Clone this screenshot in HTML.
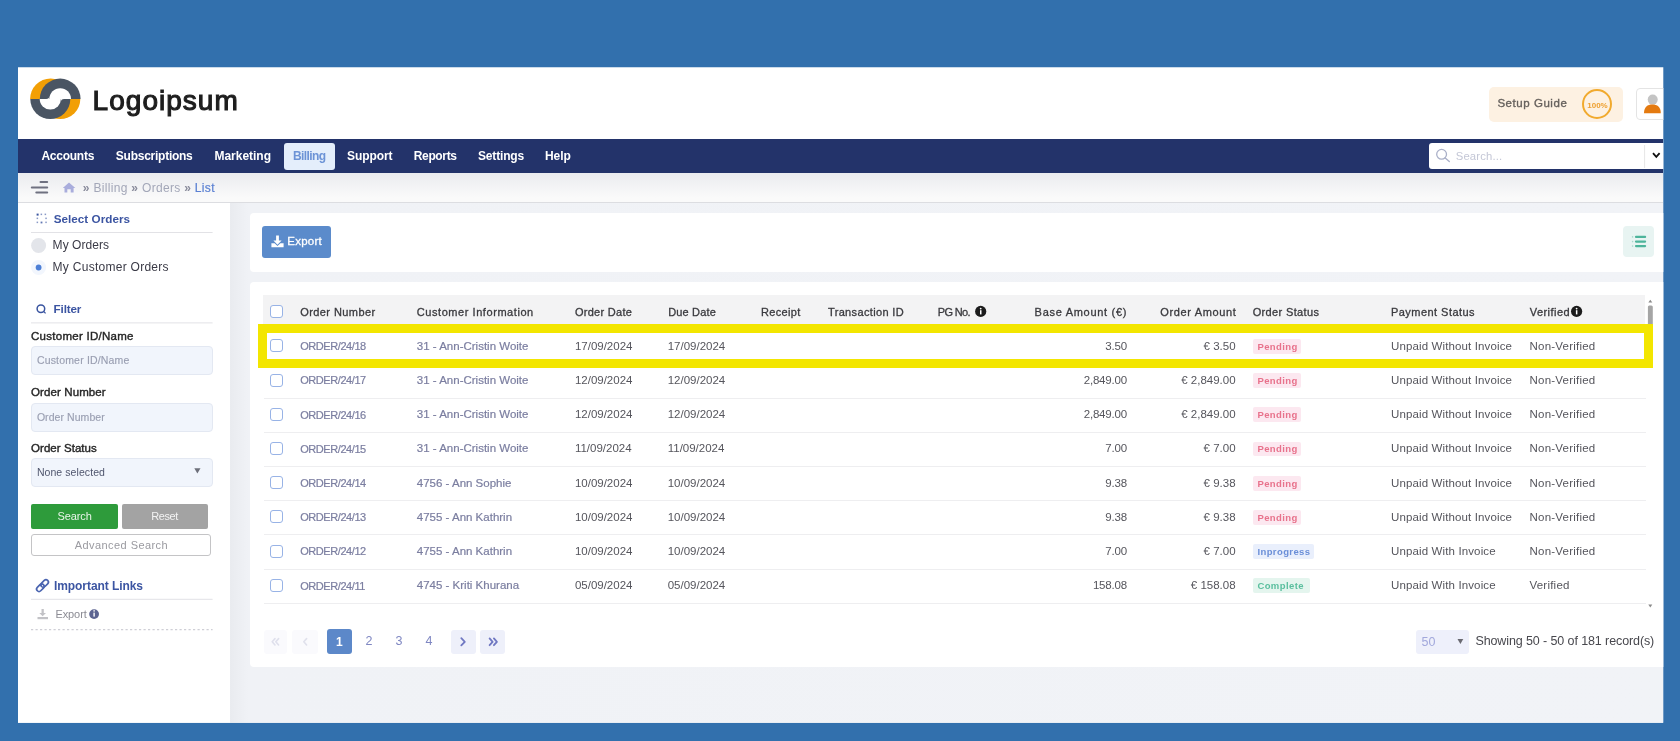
<!DOCTYPE html><html><head><meta charset="utf-8"><style>html,body{margin:0;padding:0;}body{width:1680px;height:741px;overflow:hidden;position:relative;background:#3270ad;font-family:"Liberation Sans", sans-serif;}div{box-sizing:border-box;white-space:nowrap;line-height:1;}svg{position:absolute;overflow:visible;}</style></head><body><div style="position:absolute;left:0;top:0;width:1680px;height:741px;filter:blur(0.45px);"><div style="position:absolute;left:0;top:0;width:1680px;height:741px;background:#3270ad;"></div><div style="position:absolute;left:0;top:0;width:1680px;height:741px;clip-path:inset(67.3px 16.7px 18.2px 17.5px)"><div style="position:absolute;left:17.5px;top:67.3px;width:1646px;height:656px;background:#fff;overflow:hidden;"></div>
<svg style="left:0;top:0" width="1680" height="741" viewBox="0 0 1680 741">
<path d="M30.1 99 A20.5 20.5 0 0 1 71.1 99 Z" fill="#f29f05"/>
<path d="M40.3 99 A80.7 20.4 0 0 1 40.3 99 Z" fill="#4a5563"/>
<path d="M39.8 99 A20.4 20.4 0 0 1 80.6 99 Z" fill="#4a5563"/>
<path d="M49.4 99 A10.8 10.8 0 0 1 71 99 Z" fill="#fff"/>
<path d="M40.1 99 A20.1 20.1 0 0 0 80.3 99 Z" fill="#f29f05"/>
<path d="M30.3 99 A20 20 0 0 0 70.3 99 Z" fill="#4a5563"/>
<path d="M39.7 99 A10.6 10.6 0 0 0 60.9 99 Z" fill="#fff"/>
<path d="M49.4 95.8 L49.4 99 L46.2 99 A3.2 3.2 0 0 0 49.4 95.8 Z" fill="#fff"/>
<path d="M60.9 102.2 L60.9 99 L64.1 99 A3.2 3.2 0 0 0 60.9 102.2 Z" fill="#fff"/>
</svg>
<div id="t0" style="position:absolute;left:92.60px;top:87.10px;font-size:28px;font-weight:400;color:#1e1e1e;letter-spacing:1.027px;-webkit-text-stroke:1.1px #1e1e1e;">Logoipsum</div>
<div style="position:absolute;left:1489.3px;top:86.5px;width:133.4px;height:35.4px;background:#fdf1e2;border-radius:5px;"></div>
<div id="t1" style="position:absolute;left:1497.40px;top:97.52px;font-size:11.5px;font-weight:400;color:#66615d;letter-spacing:0.546px;-webkit-text-stroke:0.35px #66615d;">Setup Guide</div>
<div style="position:absolute;left:1582.4px;top:89.3px;width:30px;height:30px;border:2.3px solid #f1aa2e;border-radius:50%;"></div>
<div id="t2" style="position:absolute;left:1587.30px;top:101.70px;font-size:8px;font-weight:700;color:#eea030;letter-spacing:-0.023px;">100%</div>
<div style="position:absolute;left:1636.3px;top:88.2px;width:40px;height:31.6px;border:1px solid #e4e4e4;border-radius:4px;background:#fff;"></div>
<svg style="left:0;top:0" width="1680" height="741">
<circle cx="1652.7" cy="99.6" r="5" fill="#c4c4c4"/>
<path d="M1644 113.3 C1644 107 1647.5 104.5 1652.4 104.5 C1657.3 104.5 1660.8 107 1660.8 113.3 Z" fill="#e47a10"/>
</svg>
<div style="position:absolute;left:18px;top:138.5px;width:1645.3px;height:34.7px;background:#23336a;"></div>
<div style="position:absolute;left:283.5px;top:142.5px;width:51.2px;height:27.4px;background:#e4eefb;border-radius:3px;"></div>
<div id="t3" style="position:absolute;left:41.40px;top:150.10px;font-size:12px;font-weight:700;color:#ffffff;letter-spacing:-0.241px;">Accounts</div>
<div id="t4" style="position:absolute;left:115.80px;top:150.10px;font-size:12px;font-weight:700;color:#ffffff;letter-spacing:-0.251px;">Subscriptions</div>
<div id="t5" style="position:absolute;left:214.50px;top:150.10px;font-size:12px;font-weight:700;color:#ffffff;letter-spacing:-0.023px;">Marketing</div>
<div id="t6" style="position:absolute;left:293.00px;top:150.10px;font-size:12px;font-weight:700;color:#6c93d6;letter-spacing:-0.579px;">Billing</div>
<div id="t7" style="position:absolute;left:347.00px;top:150.10px;font-size:12px;font-weight:700;color:#ffffff;letter-spacing:-0.083px;">Support</div>
<div id="t8" style="position:absolute;left:413.75px;top:150.10px;font-size:12px;font-weight:700;color:#ffffff;letter-spacing:-0.357px;">Reports</div>
<div id="t9" style="position:absolute;left:478.00px;top:150.10px;font-size:12px;font-weight:700;color:#ffffff;letter-spacing:-0.163px;">Settings</div>
<div id="t10" style="position:absolute;left:545.00px;top:150.10px;font-size:12px;font-weight:700;color:#ffffff;letter-spacing:-0.072px;">Help</div>
<div style="position:absolute;left:1429.4px;top:143.4px;width:260px;height:25.9px;background:#fff;border-radius:3px;"></div>
<svg style="left:0;top:0" width="1680" height="741">
<circle cx="1441.6" cy="154.3" r="4.9" fill="none" stroke="#aab0c8" stroke-width="1.3"/>
<line x1="1445.2" y1="157.9" x2="1449.3" y2="161.6" stroke="#aab0c8" stroke-width="1.4" stroke-linecap="round"/>
<line x1="1644.6" y1="145" x2="1644.6" y2="168" stroke="#e6e6e6" stroke-width="1"/>
<path d="M1653 153.2 L1656.3 156.8 L1659.6 153.2" fill="none" stroke="#111" stroke-width="1.8"/>
</svg>
<div id="t11" style="position:absolute;left:1455.70px;top:150.59px;font-size:11.3px;font-weight:400;color:#c4c7d6;letter-spacing:0.160px;">Search...</div>
<div style="position:absolute;left:18px;top:173.2px;width:1645.3px;height:29.5px;background:linear-gradient(#eaebef,#fafafa 85%);border-bottom:1px solid #dcdde1;"></div>
<svg style="left:0;top:0" width="1680" height="741">
<g stroke="#6f7180" stroke-width="2" stroke-linecap="round">
<line x1="40.5" y1="182.1" x2="47.2" y2="182.1"/>
<line x1="31.8" y1="187.4" x2="47.2" y2="187.4"/>
<line x1="36.3" y1="192.6" x2="47.2" y2="192.6"/>
</g>
<path d="M62.8 188 L69 182.6 L75.3 188 L73.6 188 L73.6 192.6 L70.7 192.6 L70.7 189.2 L67.3 189.2 L67.3 192.6 L64.5 192.6 L64.5 188 Z" fill="#a9addc"/>
</svg>
<div id="t12" style="position:absolute;left:82.80px;top:182.10px;font-size:12px;font-weight:400;color:#a3a7b8;letter-spacing:0.316px;"><b style="color:#8a8c9c">»</b> Billing <b style="color:#8a8c9c">»</b> Orders <b style="color:#8a8c9c">»</b> <span style="color:#5b80d3;-webkit-text-stroke:0.2px #5b80d3">List</span></div>
<div style="position:absolute;left:230px;top:203px;width:1433.3px;height:520.5px;background:linear-gradient(90deg,#e9ebef,#f0f2f6 18px,#f1f3f7);"></div>
<div style="position:absolute;left:18px;top:203px;width:212px;height:520.5px;background:#fff;"></div>
<div style="position:absolute;left:249.5px;top:212.5px;width:1500px;height:59.2px;background:#fff;border-radius:4px;"></div>
<div style="position:absolute;left:249.5px;top:282px;width:1500px;height:385.4px;background:#fff;border-radius:4px;"></div>
<svg style="left:0;top:0" width="1680" height="741">
<g fill="#3a55a0">
<rect x="36.6" y="213.6" width="2" height="2"/><rect x="40.6" y="213.6" width="1.5" height="1.5" opacity=".6"/><rect x="44.6" y="213.6" width="1.5" height="1.5" opacity=".6"/>
<rect x="36.6" y="217.6" width="1.5" height="1.5" opacity=".6"/><rect x="45.3" y="217.6" width="1.5" height="1.5" opacity=".6"/>
<rect x="36.6" y="221.6" width="1.5" height="1.5" opacity=".6"/><rect x="40.6" y="221.6" width="1.8" height="1.8" opacity=".8"/><rect x="45.3" y="221.6" width="1.5" height="1.5" opacity=".6"/>
</g>
<line x1="31" y1="232.5" x2="212.6" y2="232.5" stroke="#e2e2e6" stroke-width="1"/>
<circle cx="38.6" cy="245.5" r="7.5" fill="#e3e5ea"/>
<circle cx="38.6" cy="267.5" r="7.5" fill="#f2f6fd"/>
<circle cx="38.6" cy="267.5" r="2.9" fill="#4d7fd6"/>
<circle cx="40.9" cy="308.7" r="3.8" fill="none" stroke="#3a55a0" stroke-width="1.5"/>
<line x1="43.6" y1="311.4" x2="45.6" y2="313.4" stroke="#3a55a0" stroke-width="1.3"/>
<line x1="31" y1="322.9" x2="212.6" y2="322.9" stroke="#e2e2e6" stroke-width="1"/>
</svg>
<div id="t13" style="position:absolute;left:53.70px;top:213.16px;font-size:11.7px;font-weight:700;color:#3c55a2;letter-spacing:0.024px;">Select Orders</div>
<div id="t14" style="position:absolute;left:52.60px;top:239.00px;font-size:12px;font-weight:400;color:#3a3a46;letter-spacing:0.048px;">My Orders</div>
<div id="t15" style="position:absolute;left:52.60px;top:261.00px;font-size:12px;font-weight:400;color:#3a3a46;letter-spacing:0.273px;">My Customer Orders</div>
<div id="t16" style="position:absolute;left:53.60px;top:303.06px;font-size:11.7px;font-weight:700;color:#3c55a2;letter-spacing:-0.156px;">Filter</div>
<div id="t17" style="position:absolute;left:31.00px;top:330.62px;font-size:11.5px;font-weight:400;color:#262626;letter-spacing:0.272px;-webkit-text-stroke:0.4px #262626;">Customer ID/Name</div>
<div style="position:absolute;left:31px;top:346px;width:181.8px;height:29px;background:#f1f5fc;border:1px solid #e3e8f2;border-radius:4px;"></div>
<div id="t18" style="position:absolute;left:36.90px;top:355.38px;font-size:10.5px;font-weight:400;color:#9a9fb2;letter-spacing:0.176px;-webkit-text-stroke:0.15px #9a9fb2;">Customer ID/Name</div>
<div id="t19" style="position:absolute;left:31.00px;top:386.83px;font-size:11.5px;font-weight:400;color:#262626;letter-spacing:0.109px;-webkit-text-stroke:0.4px #262626;">Order Number</div>
<div style="position:absolute;left:31px;top:402.5px;width:181.8px;height:29px;background:#f1f5fc;border:1px solid #e3e8f2;border-radius:4px;"></div>
<div id="t20" style="position:absolute;left:36.90px;top:411.88px;font-size:10.5px;font-weight:400;color:#9a9fb2;letter-spacing:0.063px;-webkit-text-stroke:0.15px #9a9fb2;">Order Number</div>
<div id="t21" style="position:absolute;left:31.00px;top:442.62px;font-size:11.5px;font-weight:400;color:#262626;letter-spacing:0.054px;-webkit-text-stroke:0.4px #262626;">Order Status</div>
<div style="position:absolute;left:31px;top:458px;width:181.8px;height:28.5px;background:#f1f5fc;border:1px solid #e3e8f2;border-radius:4px;"></div>
<div id="t22" style="position:absolute;left:36.90px;top:467.38px;font-size:10.5px;font-weight:400;color:#50566e;letter-spacing:0.072px;">None selected</div>
<svg style="left:0;top:0" width="1680" height="741"><path d="M194.3 468.3 L200.5 468.3 L197.4 473.6 Z" fill="#6d6f7a"/></svg>
<div style="position:absolute;left:30.5px;top:504.2px;width:87.1px;height:24.7px;background:#2e9b3b;border-radius:2px;"></div>
<div id="t23" style="position:absolute;left:57.50px;top:511.25px;font-size:11px;font-weight:400;color:#e8f5e8;letter-spacing:-0.092px;">Search</div>
<div style="position:absolute;left:121.6px;top:504.2px;width:86.6px;height:24.7px;background:#a3a3a3;border-radius:2px;"></div>
<div id="t24" style="position:absolute;left:151.20px;top:511.25px;font-size:11px;font-weight:400;color:#f3f3f3;letter-spacing:-0.412px;">Reset</div>
<div style="position:absolute;left:31.2px;top:534px;width:180.1px;height:22.4px;background:#fff;border:1.5px solid #c4c4c6;border-radius:3px;"></div>
<div id="t25" style="position:absolute;left:74.70px;top:539.95px;font-size:11px;font-weight:400;color:#9a9aa0;letter-spacing:0.440px;">Advanced Search</div>
<svg style="left:0;top:0" width="1680" height="741">
<g fill="none" stroke="#4a64b0" stroke-width="1.7" transform="rotate(-45 42.5 585.6)">
<rect x="35.2" y="583.2" width="8.6" height="4.8" rx="2.4"/>
<rect x="41.2" y="583.2" width="8.6" height="4.8" rx="2.4"/>
</g>
<line x1="31" y1="599.3" x2="212.6" y2="599.3" stroke="#e2e2e6" stroke-width="1"/>
<g fill="#c2c2c6"><path d="M41.5 609 L43.8 609 L43.8 613 L46 613 L42.65 616.3 L39.3 613 L41.5 613 Z"/><rect x="37.5" y="617" width="10.5" height="2.2"/></g>
<circle cx="94.1" cy="614.1" r="4.9" fill="#5c6491"/>
<rect x="93.4" y="612.6" width="1.4" height="4" fill="#fff"/><circle cx="94.1" cy="610.9" r=".8" fill="#fff"/>
<line x1="31" y1="629.6" x2="212.6" y2="629.6" stroke="#cfcfd6" stroke-width="1.3" stroke-dasharray="2.2 2.3"/>
</svg>
<div id="t26" style="position:absolute;left:55.40px;top:609.15px;font-size:11px;font-weight:400;color:#8c8c94;letter-spacing:-0.079px;">Export</div>
<div id="t27" style="position:absolute;left:54.00px;top:579.60px;font-size:12px;font-weight:700;color:#3c55a2;letter-spacing:-0.073px;">Important Links</div>
<div style="position:absolute;left:262.4px;top:225.8px;width:68.9px;height:32px;background:#5b8bcb;border-radius:3px;"></div>
<svg style="left:0;top:0" width="1680" height="741">
<g fill="#fff"><path d="M276.1 235.6 L278.9 235.6 L278.9 240.6 L281.6 240.6 L277.5 244.7 L273.4 240.6 L276.1 240.6 Z"/>
<path d="M271.4 243.2 L274.6 243.2 L277.5 246 L280.4 243.2 L283.6 243.2 L283.6 247.3 L271.4 247.3 Z"/></g>
</svg>
<div id="t28" style="position:absolute;left:287.30px;top:235.82px;font-size:11.5px;font-weight:400;color:#ffffff;letter-spacing:0.250px;-webkit-text-stroke:0.3px #ffffff;">Export</div>
<div style="position:absolute;left:1622.5px;top:225.8px;width:31.9px;height:31.6px;background:#e8f4f2;border-radius:4px;"></div>
<svg style="left:0;top:0" width="1680" height="741">
<g stroke="#4db49b" stroke-width="2.2" stroke-linecap="round"><line x1="1636" y1="236.9" x2="1645.1" y2="236.9"/><line x1="1636" y1="241.6" x2="1645.1" y2="241.6"/><line x1="1636" y1="246.1" x2="1645.1" y2="246.1"/></g>
<g fill="#a9d8cd"><circle cx="1632.6" cy="236.9" r=".8"/><circle cx="1632.6" cy="241.6" r=".8"/><circle cx="1632.6" cy="246.1" r=".8"/></g>
</svg>
<div style="position:absolute;left:262.5px;top:295.4px;width:1382.5px;height:33.4px;background:#f3f3f4;"></div>
<div style="position:absolute;left:270px;top:304.7px;width:13px;height:13px;border:1.6px solid #98b3e6;border-radius:3px;background:#fff;"></div>
<div id="t29" style="position:absolute;left:300.20px;top:306.55px;font-size:11px;font-weight:400;color:#3a3a3e;letter-spacing:0.428px;-webkit-text-stroke:0.3px #3a3a3e;">Order Number</div>
<div id="t30" style="position:absolute;left:416.80px;top:306.55px;font-size:11px;font-weight:400;color:#3a3a3e;letter-spacing:0.560px;-webkit-text-stroke:0.3px #3a3a3e;">Customer Information</div>
<div id="t31" style="position:absolute;left:574.90px;top:306.55px;font-size:11px;font-weight:400;color:#3a3a3e;letter-spacing:0.298px;-webkit-text-stroke:0.3px #3a3a3e;">Order Date</div>
<div id="t32" style="position:absolute;left:668.20px;top:306.55px;font-size:11px;font-weight:400;color:#3a3a3e;letter-spacing:0.159px;-webkit-text-stroke:0.3px #3a3a3e;">Due Date</div>
<div id="t33" style="position:absolute;left:760.90px;top:306.55px;font-size:11px;font-weight:400;color:#3a3a3e;letter-spacing:0.367px;-webkit-text-stroke:0.3px #3a3a3e;">Receipt</div>
<div id="t34" style="position:absolute;left:828.00px;top:306.55px;font-size:11px;font-weight:400;color:#3a3a3e;letter-spacing:0.344px;-webkit-text-stroke:0.3px #3a3a3e;">Transaction ID</div>
<div id="t35" style="position:absolute;left:937.70px;top:306.55px;font-size:11px;font-weight:400;color:#3a3a3e;letter-spacing:-0.616px;-webkit-text-stroke:0.3px #3a3a3e;">PG No.</div>
<div id="t36" style="position:absolute;left:1034.60px;top:306.55px;font-size:11px;font-weight:400;color:#3a3a3e;letter-spacing:0.712px;-webkit-text-stroke:0.3px #3a3a3e;">Base Amount (€)</div>
<div id="t37" style="position:absolute;left:1160.30px;top:306.55px;font-size:11px;font-weight:400;color:#3a3a3e;letter-spacing:0.638px;-webkit-text-stroke:0.3px #3a3a3e;">Order Amount</div>
<div id="t38" style="position:absolute;left:1252.70px;top:306.55px;font-size:11px;font-weight:400;color:#3a3a3e;letter-spacing:0.358px;-webkit-text-stroke:0.3px #3a3a3e;">Order Status</div>
<div id="t39" style="position:absolute;left:1391.00px;top:306.55px;font-size:11px;font-weight:400;color:#3a3a3e;letter-spacing:0.457px;-webkit-text-stroke:0.3px #3a3a3e;">Payment Status</div>
<div id="t40" style="position:absolute;left:1529.70px;top:306.55px;font-size:11px;font-weight:400;color:#3a3a3e;letter-spacing:0.471px;-webkit-text-stroke:0.3px #3a3a3e;">Verified</div>
<svg style="left:0;top:0" width="1680" height="741"><circle cx="980.7" cy="311.4" r="5.6" fill="#1c1c1c"/><rect x="980.0" y="310.2" width="1.5" height="4.2" fill="#fff"/><circle cx="980.7" cy="308.59999999999997" r=".9" fill="#fff"/></svg>
<svg style="left:0;top:0" width="1680" height="741"><circle cx="1576.6" cy="311.4" r="5.6" fill="#1c1c1c"/><rect x="1575.8999999999999" y="310.2" width="1.5" height="4.2" fill="#fff"/><circle cx="1576.6" cy="308.59999999999997" r=".9" fill="#fff"/></svg>
<div style="position:absolute;left:264px;top:363.3px;width:1381.6px;height:1.2px;background:#eeeef0;"></div>
<div style="position:absolute;left:270px;top:339.3px;width:13px;height:13px;border:1.6px solid #98b3e6;border-radius:3px;background:#fff;"></div>
<div id="t41" style="position:absolute;left:300.20px;top:341.15px;font-size:11px;font-weight:400;color:#7b7ea0;letter-spacing:-0.430px;-webkit-text-stroke:0.2px #7b7ea0;">ORDER/24/18</div>
<div id="t42" style="position:absolute;left:416.80px;top:340.73px;font-size:11.5px;font-weight:400;color:#7b7ea0;letter-spacing:0.000px;-webkit-text-stroke:0.2px #7b7ea0;">31 - Ann-Cristin Woite</div>
<div id="t43" style="position:absolute;left:574.90px;top:340.73px;font-size:11.5px;font-weight:400;color:#55555c;letter-spacing:0.000px;">17/09/2024</div>
<div id="t44" style="position:absolute;left:667.70px;top:340.73px;font-size:11.5px;font-weight:400;color:#55555c;letter-spacing:0.000px;">17/09/2024</div>
<div id="t45" style="position:absolute;left:1105.31px;top:340.73px;font-size:11.5px;font-weight:400;color:#55555c;letter-spacing:-0.200px;">3.50</div>
<div id="t46" style="position:absolute;left:1203.62px;top:340.73px;font-size:11.5px;font-weight:400;color:#55555c;letter-spacing:0.000px;">€ 3.50</div>
<div style="position:absolute;left:1253.3px;top:339.0px;width:48.1px;height:14.8px;background:#fce8f0;border-radius:2px;"></div>
<div id="t47" style="position:absolute;left:1257.40px;top:341.72px;font-size:9.5px;font-weight:700;color:#e8728c;letter-spacing:0.400px;">Pending</div>
<div id="t48" style="position:absolute;left:1391.00px;top:340.73px;font-size:11.5px;font-weight:400;color:#55555c;letter-spacing:0.130px;">Unpaid Without Invoice</div>
<div id="t49" style="position:absolute;left:1529.50px;top:340.73px;font-size:11.5px;font-weight:400;color:#55555c;letter-spacing:0.220px;">Non-Verified</div>
<div style="position:absolute;left:264px;top:397.5px;width:1381.6px;height:1.2px;background:#eeeef0;"></div>
<div style="position:absolute;left:270px;top:373.5px;width:13px;height:13px;border:1.6px solid #98b3e6;border-radius:3px;background:#fff;"></div>
<div id="t50" style="position:absolute;left:300.20px;top:375.35px;font-size:11px;font-weight:400;color:#7b7ea0;letter-spacing:-0.430px;-webkit-text-stroke:0.2px #7b7ea0;">ORDER/24/17</div>
<div id="t51" style="position:absolute;left:416.80px;top:374.93px;font-size:11.5px;font-weight:400;color:#7b7ea0;letter-spacing:0.000px;-webkit-text-stroke:0.2px #7b7ea0;">31 - Ann-Cristin Woite</div>
<div id="t52" style="position:absolute;left:574.90px;top:374.93px;font-size:11.5px;font-weight:400;color:#55555c;letter-spacing:0.000px;">12/09/2024</div>
<div id="t53" style="position:absolute;left:667.70px;top:374.93px;font-size:11.5px;font-weight:400;color:#55555c;letter-spacing:0.000px;">12/09/2024</div>
<div id="t54" style="position:absolute;left:1083.73px;top:374.93px;font-size:11.5px;font-weight:400;color:#55555c;letter-spacing:-0.200px;">2,849.00</div>
<div id="t55" style="position:absolute;left:1181.24px;top:374.93px;font-size:11.5px;font-weight:400;color:#55555c;letter-spacing:0.000px;">€ 2,849.00</div>
<div style="position:absolute;left:1253.3px;top:373.2px;width:48.1px;height:14.8px;background:#fce8f0;border-radius:2px;"></div>
<div id="t56" style="position:absolute;left:1257.40px;top:375.92px;font-size:9.5px;font-weight:700;color:#e8728c;letter-spacing:0.400px;">Pending</div>
<div id="t57" style="position:absolute;left:1391.00px;top:374.93px;font-size:11.5px;font-weight:400;color:#55555c;letter-spacing:0.130px;">Unpaid Without Invoice</div>
<div id="t58" style="position:absolute;left:1529.50px;top:374.93px;font-size:11.5px;font-weight:400;color:#55555c;letter-spacing:0.220px;">Non-Verified</div>
<div style="position:absolute;left:264px;top:431.70000000000005px;width:1381.6px;height:1.2px;background:#eeeef0;"></div>
<div style="position:absolute;left:270px;top:407.70000000000005px;width:13px;height:13px;border:1.6px solid #98b3e6;border-radius:3px;background:#fff;"></div>
<div id="t59" style="position:absolute;left:300.20px;top:409.55px;font-size:11px;font-weight:400;color:#7b7ea0;letter-spacing:-0.430px;-webkit-text-stroke:0.2px #7b7ea0;">ORDER/24/16</div>
<div id="t60" style="position:absolute;left:416.80px;top:409.12px;font-size:11.5px;font-weight:400;color:#7b7ea0;letter-spacing:0.000px;-webkit-text-stroke:0.2px #7b7ea0;">31 - Ann-Cristin Woite</div>
<div id="t61" style="position:absolute;left:574.90px;top:409.12px;font-size:11.5px;font-weight:400;color:#55555c;letter-spacing:0.000px;">12/09/2024</div>
<div id="t62" style="position:absolute;left:667.70px;top:409.12px;font-size:11.5px;font-weight:400;color:#55555c;letter-spacing:0.000px;">12/09/2024</div>
<div id="t63" style="position:absolute;left:1083.73px;top:409.12px;font-size:11.5px;font-weight:400;color:#55555c;letter-spacing:-0.200px;">2,849.00</div>
<div id="t64" style="position:absolute;left:1181.24px;top:409.12px;font-size:11.5px;font-weight:400;color:#55555c;letter-spacing:0.000px;">€ 2,849.00</div>
<div style="position:absolute;left:1253.3px;top:407.4px;width:48.1px;height:14.8px;background:#fce8f0;border-radius:2px;"></div>
<div id="t65" style="position:absolute;left:1257.40px;top:410.12px;font-size:9.5px;font-weight:700;color:#e8728c;letter-spacing:0.400px;">Pending</div>
<div id="t66" style="position:absolute;left:1391.00px;top:409.12px;font-size:11.5px;font-weight:400;color:#55555c;letter-spacing:0.130px;">Unpaid Without Invoice</div>
<div id="t67" style="position:absolute;left:1529.50px;top:409.12px;font-size:11.5px;font-weight:400;color:#55555c;letter-spacing:0.220px;">Non-Verified</div>
<div style="position:absolute;left:264px;top:465.90000000000003px;width:1381.6px;height:1.2px;background:#eeeef0;"></div>
<div style="position:absolute;left:270px;top:441.90000000000003px;width:13px;height:13px;border:1.6px solid #98b3e6;border-radius:3px;background:#fff;"></div>
<div id="t68" style="position:absolute;left:300.20px;top:443.75px;font-size:11px;font-weight:400;color:#7b7ea0;letter-spacing:-0.430px;-webkit-text-stroke:0.2px #7b7ea0;">ORDER/24/15</div>
<div id="t69" style="position:absolute;left:416.80px;top:443.33px;font-size:11.5px;font-weight:400;color:#7b7ea0;letter-spacing:0.000px;-webkit-text-stroke:0.2px #7b7ea0;">31 - Ann-Cristin Woite</div>
<div id="t70" style="position:absolute;left:574.90px;top:443.33px;font-size:11.5px;font-weight:400;color:#55555c;letter-spacing:0.000px;">11/09/2024</div>
<div id="t71" style="position:absolute;left:667.70px;top:443.33px;font-size:11.5px;font-weight:400;color:#55555c;letter-spacing:0.000px;">11/09/2024</div>
<div id="t72" style="position:absolute;left:1105.31px;top:443.33px;font-size:11.5px;font-weight:400;color:#55555c;letter-spacing:-0.200px;">7.00</div>
<div id="t73" style="position:absolute;left:1203.62px;top:443.33px;font-size:11.5px;font-weight:400;color:#55555c;letter-spacing:0.000px;">€ 7.00</div>
<div style="position:absolute;left:1253.3px;top:441.6px;width:48.1px;height:14.8px;background:#fce8f0;border-radius:2px;"></div>
<div id="t74" style="position:absolute;left:1257.40px;top:444.32px;font-size:9.5px;font-weight:700;color:#e8728c;letter-spacing:0.400px;">Pending</div>
<div id="t75" style="position:absolute;left:1391.00px;top:443.33px;font-size:11.5px;font-weight:400;color:#55555c;letter-spacing:0.130px;">Unpaid Without Invoice</div>
<div id="t76" style="position:absolute;left:1529.50px;top:443.33px;font-size:11.5px;font-weight:400;color:#55555c;letter-spacing:0.220px;">Non-Verified</div>
<div style="position:absolute;left:264px;top:500.1px;width:1381.6px;height:1.2px;background:#eeeef0;"></div>
<div style="position:absolute;left:270px;top:476.1px;width:13px;height:13px;border:1.6px solid #98b3e6;border-radius:3px;background:#fff;"></div>
<div id="t77" style="position:absolute;left:300.20px;top:477.95px;font-size:11px;font-weight:400;color:#7b7ea0;letter-spacing:-0.430px;-webkit-text-stroke:0.2px #7b7ea0;">ORDER/24/14</div>
<div id="t78" style="position:absolute;left:416.80px;top:477.53px;font-size:11.5px;font-weight:400;color:#7b7ea0;letter-spacing:0.000px;-webkit-text-stroke:0.2px #7b7ea0;">4756 - Ann Sophie</div>
<div id="t79" style="position:absolute;left:574.90px;top:477.53px;font-size:11.5px;font-weight:400;color:#55555c;letter-spacing:0.000px;">10/09/2024</div>
<div id="t80" style="position:absolute;left:667.70px;top:477.53px;font-size:11.5px;font-weight:400;color:#55555c;letter-spacing:0.000px;">10/09/2024</div>
<div id="t81" style="position:absolute;left:1105.31px;top:477.53px;font-size:11.5px;font-weight:400;color:#55555c;letter-spacing:-0.200px;">9.38</div>
<div id="t82" style="position:absolute;left:1203.62px;top:477.53px;font-size:11.5px;font-weight:400;color:#55555c;letter-spacing:0.000px;">€ 9.38</div>
<div style="position:absolute;left:1253.3px;top:475.8px;width:48.1px;height:14.8px;background:#fce8f0;border-radius:2px;"></div>
<div id="t83" style="position:absolute;left:1257.40px;top:478.52px;font-size:9.5px;font-weight:700;color:#e8728c;letter-spacing:0.400px;">Pending</div>
<div id="t84" style="position:absolute;left:1391.00px;top:477.53px;font-size:11.5px;font-weight:400;color:#55555c;letter-spacing:0.130px;">Unpaid Without Invoice</div>
<div id="t85" style="position:absolute;left:1529.50px;top:477.53px;font-size:11.5px;font-weight:400;color:#55555c;letter-spacing:0.220px;">Non-Verified</div>
<div style="position:absolute;left:264px;top:534.3px;width:1381.6px;height:1.2px;background:#eeeef0;"></div>
<div style="position:absolute;left:270px;top:510.3px;width:13px;height:13px;border:1.6px solid #98b3e6;border-radius:3px;background:#fff;"></div>
<div id="t86" style="position:absolute;left:300.20px;top:512.15px;font-size:11px;font-weight:400;color:#7b7ea0;letter-spacing:-0.430px;-webkit-text-stroke:0.2px #7b7ea0;">ORDER/24/13</div>
<div id="t87" style="position:absolute;left:416.80px;top:511.73px;font-size:11.5px;font-weight:400;color:#7b7ea0;letter-spacing:0.000px;-webkit-text-stroke:0.2px #7b7ea0;">4755 - Ann Kathrin</div>
<div id="t88" style="position:absolute;left:574.90px;top:511.73px;font-size:11.5px;font-weight:400;color:#55555c;letter-spacing:0.000px;">10/09/2024</div>
<div id="t89" style="position:absolute;left:667.70px;top:511.73px;font-size:11.5px;font-weight:400;color:#55555c;letter-spacing:0.000px;">10/09/2024</div>
<div id="t90" style="position:absolute;left:1105.31px;top:511.73px;font-size:11.5px;font-weight:400;color:#55555c;letter-spacing:-0.200px;">9.38</div>
<div id="t91" style="position:absolute;left:1203.62px;top:511.73px;font-size:11.5px;font-weight:400;color:#55555c;letter-spacing:0.000px;">€ 9.38</div>
<div style="position:absolute;left:1253.3px;top:510.0px;width:48.1px;height:14.8px;background:#fce8f0;border-radius:2px;"></div>
<div id="t92" style="position:absolute;left:1257.40px;top:512.72px;font-size:9.5px;font-weight:700;color:#e8728c;letter-spacing:0.400px;">Pending</div>
<div id="t93" style="position:absolute;left:1391.00px;top:511.73px;font-size:11.5px;font-weight:400;color:#55555c;letter-spacing:0.130px;">Unpaid Without Invoice</div>
<div id="t94" style="position:absolute;left:1529.50px;top:511.73px;font-size:11.5px;font-weight:400;color:#55555c;letter-spacing:0.220px;">Non-Verified</div>
<div style="position:absolute;left:264px;top:568.5px;width:1381.6px;height:1.2px;background:#eeeef0;"></div>
<div style="position:absolute;left:270px;top:544.5px;width:13px;height:13px;border:1.6px solid #98b3e6;border-radius:3px;background:#fff;"></div>
<div id="t95" style="position:absolute;left:300.20px;top:546.35px;font-size:11px;font-weight:400;color:#7b7ea0;letter-spacing:-0.430px;-webkit-text-stroke:0.2px #7b7ea0;">ORDER/24/12</div>
<div id="t96" style="position:absolute;left:416.80px;top:545.93px;font-size:11.5px;font-weight:400;color:#7b7ea0;letter-spacing:0.000px;-webkit-text-stroke:0.2px #7b7ea0;">4755 - Ann Kathrin</div>
<div id="t97" style="position:absolute;left:574.90px;top:545.93px;font-size:11.5px;font-weight:400;color:#55555c;letter-spacing:0.000px;">10/09/2024</div>
<div id="t98" style="position:absolute;left:667.70px;top:545.93px;font-size:11.5px;font-weight:400;color:#55555c;letter-spacing:0.000px;">10/09/2024</div>
<div id="t99" style="position:absolute;left:1105.31px;top:545.93px;font-size:11.5px;font-weight:400;color:#55555c;letter-spacing:-0.200px;">7.00</div>
<div id="t100" style="position:absolute;left:1203.62px;top:545.93px;font-size:11.5px;font-weight:400;color:#55555c;letter-spacing:0.000px;">€ 7.00</div>
<div style="position:absolute;left:1253.3px;top:544.2px;width:60.5px;height:14.8px;background:#e9effc;border-radius:2px;"></div>
<div id="t101" style="position:absolute;left:1257.40px;top:546.92px;font-size:9.5px;font-weight:700;color:#6b8fd8;letter-spacing:0.400px;">Inprogress</div>
<div id="t102" style="position:absolute;left:1391.00px;top:545.93px;font-size:11.5px;font-weight:400;color:#55555c;letter-spacing:0.130px;">Unpaid With Invoice</div>
<div id="t103" style="position:absolute;left:1529.50px;top:545.93px;font-size:11.5px;font-weight:400;color:#55555c;letter-spacing:0.220px;">Non-Verified</div>
<div style="position:absolute;left:264px;top:602.7px;width:1381.6px;height:1.2px;background:#eeeef0;"></div>
<div style="position:absolute;left:270px;top:578.7px;width:13px;height:13px;border:1.6px solid #98b3e6;border-radius:3px;background:#fff;"></div>
<div id="t104" style="position:absolute;left:300.20px;top:580.55px;font-size:11px;font-weight:400;color:#7b7ea0;letter-spacing:-0.430px;-webkit-text-stroke:0.2px #7b7ea0;">ORDER/24/11</div>
<div id="t105" style="position:absolute;left:416.80px;top:580.13px;font-size:11.5px;font-weight:400;color:#7b7ea0;letter-spacing:0.000px;-webkit-text-stroke:0.2px #7b7ea0;">4745 - Kriti Khurana</div>
<div id="t106" style="position:absolute;left:574.90px;top:580.13px;font-size:11.5px;font-weight:400;color:#55555c;letter-spacing:0.000px;">05/09/2024</div>
<div id="t107" style="position:absolute;left:667.70px;top:580.13px;font-size:11.5px;font-weight:400;color:#55555c;letter-spacing:0.000px;">05/09/2024</div>
<div id="t108" style="position:absolute;left:1092.91px;top:580.13px;font-size:11.5px;font-weight:400;color:#55555c;letter-spacing:-0.200px;">158.08</div>
<div id="t109" style="position:absolute;left:1190.83px;top:580.13px;font-size:11.5px;font-weight:400;color:#55555c;letter-spacing:0.000px;">€ 158.08</div>
<div style="position:absolute;left:1253.3px;top:578.4px;width:56.7px;height:14.8px;background:#e4f5ee;border-radius:2px;"></div>
<div id="t110" style="position:absolute;left:1257.40px;top:581.12px;font-size:9.5px;font-weight:700;color:#5abf9e;letter-spacing:0.400px;">Complete</div>
<div id="t111" style="position:absolute;left:1391.00px;top:580.13px;font-size:11.5px;font-weight:400;color:#55555c;letter-spacing:0.130px;">Unpaid With Invoice</div>
<div id="t112" style="position:absolute;left:1529.50px;top:580.13px;font-size:11.5px;font-weight:400;color:#55555c;letter-spacing:0.220px;">Verified</div>
<svg style="left:0;top:0" width="1680" height="741">
<path d="M1648.3 302.6 L1652.3 302.6 L1650.3 299.8 Z" fill="#8a8a8a"/>
<path d="M1648.3 604.6 L1652.3 604.6 L1650.3 607.4 Z" fill="#8a8a8a"/>
<rect x="1647.9" y="305.6" width="4.9" height="50" rx="1.5" fill="#a5a5a5"/>
</svg>
<div style="position:absolute;left:257.6px;top:323.9px;width:1395px;height:43.8px;border:9.3px solid #f3e600;"></div>
<div style="position:absolute;left:263.9px;top:630px;width:23.2px;height:24.4px;background:#fafafd;border-radius:3px;"></div>
<div style="position:absolute;left:292.4px;top:630px;width:25.2px;height:24.4px;background:#fafafd;border-radius:3px;"></div>
<div style="position:absolute;left:326.9px;top:629.3px;width:25.1px;height:25.1px;background:#5c88c9;border-radius:3px;"></div>
<div style="position:absolute;left:450.7px;top:630px;width:25.3px;height:24.4px;background:#eef0fa;border-radius:3px;"></div>
<div style="position:absolute;left:480.4px;top:630px;width:24.8px;height:24.4px;background:#eef0fa;border-radius:3px;"></div>
<svg style="left:0;top:0" width="1680" height="741">
<g fill="none" stroke-width="1.6" stroke-linecap="round" stroke-linejoin="round">
<path d="M275 638.6 L272.2 641.8 L275 645 M278.6 638.6 L275.8 641.8 L278.6 645" stroke="#dfe0ec"/>
<path d="M306.6 638.6 L303.8 641.8 L306.6 645" stroke="#e0e1ec"/>
<path d="M461.3 638.2 L464.8 641.8 L461.3 645.4" stroke="#7078c2" stroke-width="1.8"/>
<path d="M489.6 638.4 L492.6 641.8 L489.6 645.2 M493.9 638.4 L496.9 641.8 L493.9 645.2" stroke="#7078c2" stroke-width="1.8"/>
</g></svg>
<div id="t113" style="position:absolute;left:336.06px;top:635.80px;font-size:12px;font-weight:700;color:#ffffff;letter-spacing:0.000px;">1</div>
<div id="t114" style="position:absolute;left:365.57px;top:635.38px;font-size:12.5px;font-weight:400;color:#7f87c2;letter-spacing:0.000px;">2</div>
<div id="t115" style="position:absolute;left:395.57px;top:635.38px;font-size:12.5px;font-weight:400;color:#7f87c2;letter-spacing:0.000px;">3</div>
<div id="t116" style="position:absolute;left:425.57px;top:635.38px;font-size:12.5px;font-weight:400;color:#7f87c2;letter-spacing:0.000px;">4</div>
<div style="position:absolute;left:1416.3px;top:629.7px;width:52.6px;height:24.5px;background:#eef0fb;border-radius:3px;"></div>
<div id="t117" style="position:absolute;left:1421.50px;top:635.67px;font-size:12.5px;font-weight:400;color:#a2a8dc;letter-spacing:0.000px;">50</div>
<svg style="left:0;top:0" width="1680" height="741"><path d="M1457.5 639.1 L1463.3 639.1 L1460.4 644 Z" fill="#6a6a72"/></svg>
<div id="t118" style="position:absolute;left:1475.40px;top:634.77px;font-size:12.5px;font-weight:400;color:#48484e;letter-spacing:-0.102px;">Showing 50 - 50 of 181 record(s)</div></div></div></body></html>
